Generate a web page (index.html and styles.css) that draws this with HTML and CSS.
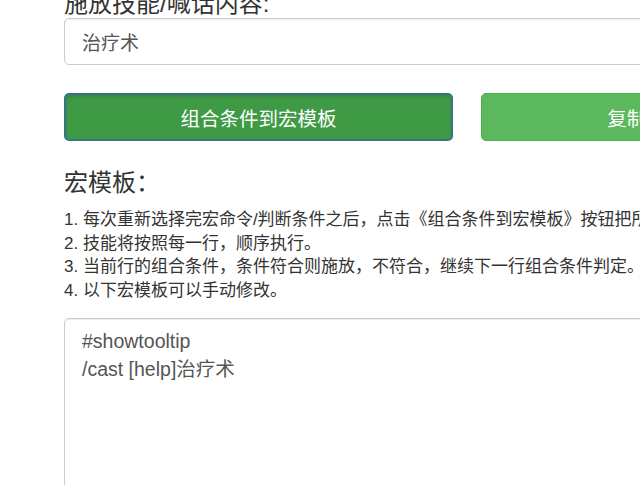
FILE: index.html
```html
<!DOCTYPE html>
<html lang="zh-CN">
<head>
<meta charset="utf-8">
<title>宏模板</title>
<link rel="stylesheet" href="styles.css">
</head>
<body>
<div class="page">
  <div class="field">
    <label class="field-label">施放技能/喊话内容:</label>
    <input class="text-input" type="text" value="治疗术">
  </div>
  <div class="btn-row">
    <button class="btn btn-active">组合条件到宏模板</button>
    <button class="btn btn-success">复制宏到剪贴板</button>
  </div>
  <h3 class="section-title">宏模板：</h3>
  <ol class="notes">
    <li>1. 每次重新选择完宏命令/判断条件之后，点击《组合条件到宏模板》按钮把所有条件组合到宏模板中。</li>
    <li>2. 技能将按照每一行，顺序执行。</li>
    <li>3. 当前行的组合条件，条件符合则施放，不符合，继续下一行组合条件判定。</li>
    <li>4. 以下宏模板可以手动修改。</li>
  </ol>
  <textarea class="macro">#showtooltip
/cast [help]治疗术</textarea>
</div>
</body>
</html>
```

FILE: styles.css
```css
html, body {
  margin: 0;
  padding: 0;
  background: #ffffff;
  overflow: hidden;
}

body {
  font-family: "Liberation Sans", "Noto Sans CJK SC", sans-serif;
  color: #333333;
}

.page {
  width: 806px;
  padding-left: 64px;
  margin-top: -9px;
}

.field {
  display: flex;
  flex-direction: column;
}

.field-label {
  font-size: 24px;
  line-height: 26px;
  margin-bottom: 1px;
  color: #333333;
}

.text-input {
  box-sizing: border-box;
  width: 100%;
  height: 47px;
  margin: 0;
  padding: 0 17px;
  font-family: "Liberation Sans", "Noto Sans CJK SC", sans-serif;
  font-size: 19px;
  color: #555555;
  border: 1px solid #cccccc;
  border-radius: 5px;
  box-shadow: inset 0 1px 1px rgba(0, 0, 0, 0.075);
  outline: none;
}

.btn-row {
  display: grid;
  grid-template-columns: 1fr 1fr;
  column-gap: 28px;
  margin-top: 28px;
}

.btn {
  box-sizing: border-box;
  height: 48px;
  margin: 0;
  padding: 0 16px;
  font-family: "Liberation Sans", "Noto Sans CJK SC", sans-serif;
  font-size: 19.5px;
  color: #ffffff;
  border-radius: 5px;
  text-align: center;
  cursor: pointer;
}

.btn-active {
  background: #3f9a46;
  border: 2px solid #367385;
  box-shadow: inset 0 2px 4px rgba(0, 0, 0, 0.12);
}

.btn-success {
  background: #5cb85c;
  border: 1px solid #4cae4c;
}

.section-title {
  margin: 29px 0 0;
  font-size: 24px;
  line-height: 26px;
  font-weight: normal;
  color: #333333;
}

.notes {
  list-style: none;
  margin: 12px 0 0;
  padding: 0;
  font-size: 17px;
  line-height: 23.5px;
  color: #333333;
}

.macro {
  display: block;
  box-sizing: border-box;
  width: 100%;
  height: 260px;
  margin: 16px 0 0;
  padding: 8px 17px;
  font-family: "Liberation Sans", "Noto Sans CJK SC", sans-serif;
  font-size: 19.5px;
  line-height: 28px;
  color: #555555;
  border: 1px solid #cccccc;
  border-radius: 5px;
  box-shadow: inset 0 1px 1px rgba(0, 0, 0, 0.075);
  resize: none;
  outline: none;
}
```
